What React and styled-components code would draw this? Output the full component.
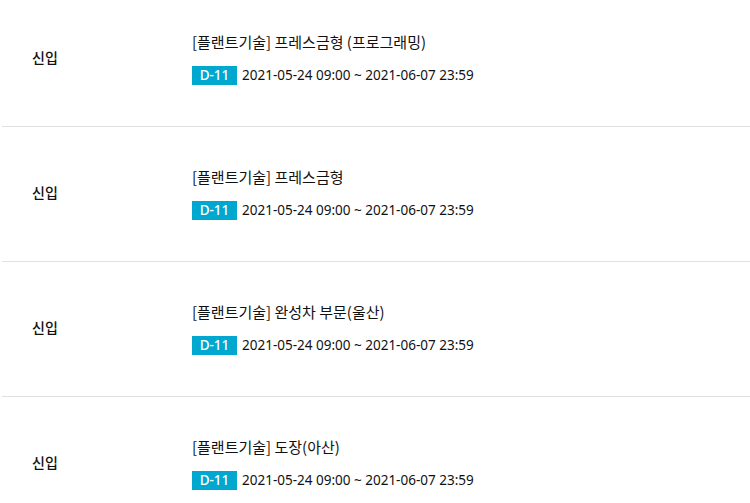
import React from "react";
import styled, { createGlobalStyle } from "styled-components";

const GlobalStyle = createGlobalStyle`
  body {
    margin: 0;
    background: #fff;
    font-family: "Noto Sans", "Noto Sans CJK KR", sans-serif;
    color: #111;
  }
`;

const List = styled.ul`
  list-style: none;
  margin: -8px 0 0;
  padding: 0 0 0 2px;
`;

const Row = styled.li`
  display: flex;
  align-items: center;
  height: 135px;
  padding-bottom: 2px;
  border-bottom: 1px solid #e1e1e1;
  box-sizing: border-box;
`;

const Type = styled.div`
  width: 190px;
  padding-left: 30px;
  padding-bottom: 2px;
  box-sizing: border-box;
  font-family: "Noto Sans CJK KR", sans-serif;
  font-size: 14px;
  font-weight: 500;
  color: #111;
`;

const Info = styled.div`
  display: flex;
  flex-direction: column;
  gap: 14px;
`;

const Title = styled.p`
  margin: 0;
  font-family: "Noto Sans CJK KR", sans-serif;
  font-size: 15px;
  line-height: 20px;
  color: #111;
`;

const Meta = styled.div`
  display: flex;
  align-items: center;
`;

const Badge = styled.span`
  display: inline-block;
  width: 45px;
  height: 19px;
  line-height: 19px;
  text-align: center;
  background: #00a8d0;
  color: #fff;
  font-size: 13.5px;
  font-weight: 500;
`;

const Period = styled.span`
  margin-left: 5px;
  font-size: 13.5px;
  color: #111;
`;

const jobs = [
  { type: "신입", title: "[플랜트기술] 프레스금형 (프로그래밍)" },
  { type: "신입", title: "[플랜트기술] 프레스금형" },
  { type: "신입", title: "[플랜트기술] 완성차 부문(울산)" },
  { type: "신입", title: "[플랜트기술] 도장(아산)" },
];

const App = () => (
  <>
    <GlobalStyle />
    <List>
      {jobs.map((job, i) => (
        <Row key={i}>
          <Type>{job.type}</Type>
          <Info>
            <Title>{job.title}</Title>
            <Meta>
              <Badge>D-11</Badge>
              <Period>2021-05-24 09:00 ~ 2021-06-07 23:59</Period>
            </Meta>
          </Info>
        </Row>
      ))}
    </List>
  </>
);

export default App;
